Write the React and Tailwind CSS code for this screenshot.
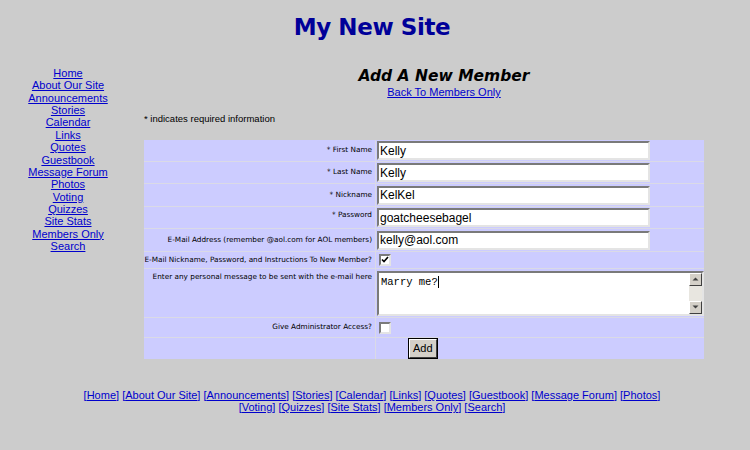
import React from 'react';

const navLinks = [
    'Home', 'About Our Site', 'Announcements', 'Stories', 'Calendar', 'Links', 'Quotes',
    'Guestbook', 'Message Forum', 'Photos', 'Voting', 'Quizzes', 'Site Stats', 'Members Only', 'Search'
];

const inset = 'border-2 border-t-[#7a7a7a] border-l-[#7a7a7a] border-b-[#e4e4e4] border-r-[#e4e4e4] bg-white';

const TextField = ({ value }) => (
    <input
        type="text"
        defaultValue={value}
        className={`${inset} w-[273px] h-[19px] px-[1px] text-[12px] text-black outline-none font-['Liberation_Sans',Arial,sans-serif]`}
    />
);

const CheckBox = ({ checked }) => (
    <span className={`${inset} inline-flex w-[12px] h-[12px] items-center justify-center`}>
        {checked && (
            <svg width="8" height="8" viewBox="0 0 8 8">
                <path d="M1 3.5 L3 5.5 L7 1" stroke="#000" strokeWidth="1.6" fill="none" />
            </svg>
        )}
    </span>
);

const Label = ({ children, top }) => (
    <div className={`bg-[#ccccff] flex justify-end pr-[3px] text-[7.3px] text-black font-['DejaVu_Sans',Verdana,sans-serif] ${top ? 'items-start pt-[3px]' : 'items-center'}`}>
        {children}
    </div>
);

const Cell = ({ children, className = '' }) => (
    <div className={`bg-[#ccccff] flex items-center pl-[1px] ${className}`}>{children}</div>
);

const Arrow = ({ up }) => (
    <div className="w-[13px] h-[13px] bg-[#d4d0c8] border border-t-white border-l-white border-b-[#404040] border-r-[#404040] flex items-center justify-center">
        <svg width="7" height="4" viewBox="0 0 7 4">
            <path d={up ? 'M0.5 3.5 L3.5 0.5 L6.5 3.5 Z' : 'M0.5 0.5 L3.5 3.5 L6.5 0.5 Z'} fill="#404040" />
        </svg>
    </div>
);

const App = () => {
    return (
        <div className="min-h-[450px] w-[750px] bg-[#cccccc] font-['Liberation_Sans',Arial,sans-serif] text-black">
            <div className="w-[744px]">
                <h1 className="pt-[10px] h-[64px] text-center text-[#000099] text-[23px] font-bold font-['DejaVu_Sans',Verdana,sans-serif] tracking-[-0.4px]">
                    My New Site
                </h1>

                <div className="flex">
                    {/* Left nav */}
                    <div className="w-[137px] flex flex-col items-center pt-[3px] text-[11px] leading-[12.36px]">
                        {navLinks.map((l) => (
                            <a key={l} href="#" className="text-[#0000cc] underline">{l}</a>
                        ))}
                    </div>

                    {/* Main content */}
                    <div className="flex-1 pl-[8px]">
                        <div className="w-[600px] flex flex-col items-center pt-[3px]">
                            <div className="text-[15.5px] leading-[19px] font-bold italic font-['DejaVu_Sans',Verdana,sans-serif]">Add A New Member</div>
                            <a href="#" className="text-[#0000cc] underline text-[11px] leading-[12px]">Back To Members Only</a>
                        </div>
                        <div className="mt-[15px] text-[9.5px] leading-[12px]">* indicates required information</div>

                        <div className="mt-[15px] w-[560px] grid grid-cols-[231px_328px] gap-px bg-[#dadae6]">
                            <Label>* First Name</Label>
                            <Cell className="h-[21px]"><TextField value="Kelly" /></Cell>
                            <Label>* Last Name</Label>
                            <Cell className="h-[21px]"><TextField value="Kelly" /></Cell>
                            <Label>* Nickname</Label>
                            <Cell className="h-[22px]"><TextField value="KelKel" /></Cell>
                            <Label top>* Password</Label>
                            <Cell className="h-[21px] items-end pb-[1px]"><TextField value="goatcheesebagel" /></Cell>
                            <Label>E-Mail Address (remember @aol.com for AOL members)</Label>
                            <Cell className="h-[22px]"><TextField value="kelly@aol.com" /></Cell>
                            <Label>E-Mail Nickname, Password, and Instructions To New Member?</Label>
                            <Cell className="h-[16px] pl-[3px]"><CheckBox checked /></Cell>
                            <Label top>Enter any personal message to be sent with the e-mail here</Label>
                            <Cell className="h-[48px]">
                                <div className={`${inset} w-[327px] h-[45px] flex`}>
                                    <div className="flex-1 pl-[2px] pt-[3px] text-[10.5px] leading-[12px] font-['Liberation_Mono','Courier_New',monospace]">
                                        Marry me?<span className="inline-block w-px h-[12px] bg-black align-middle" />
                                    </div>
                                    <div className="w-[13px] bg-[#e8e6e0] flex flex-col justify-between">
                                        <Arrow up />
                                        <Arrow />
                                    </div>
                                </div>
                            </Cell>
                            <Label>Give Administrator Access?</Label>
                            <Cell className="h-[19px] pl-[3px]"><CheckBox /></Cell>
                            <div className="bg-[#ccccff]" />
                            <Cell className="h-[21px] pl-[33px]">
                                <button className="h-[19px] px-[3px] bg-[#d4d0c8] border border-t-white border-l-white border-b-[#404040] border-r-[#404040] text-[11px] leading-[15px] outline outline-1 outline-black">
                                    Add
                                </button>
                            </Cell>
                        </div>
                    </div>
                </div>

                {/* Footer links */}
                <div className="mt-[30px] text-center text-[11px] leading-[12px] px-[80px]">
                    {navLinks.map((l, i) => (
                        <React.Fragment key={l}>
                            <span className="text-[#0000cc]">[<a href="#" className="underline">{l}</a>]</span>
                            {i === 9 ? <br /> : i < navLinks.length - 1 ? ' ' : null}
                        </React.Fragment>
                    ))}
                </div>
            </div>
        </div>
    );
};

export default App;
